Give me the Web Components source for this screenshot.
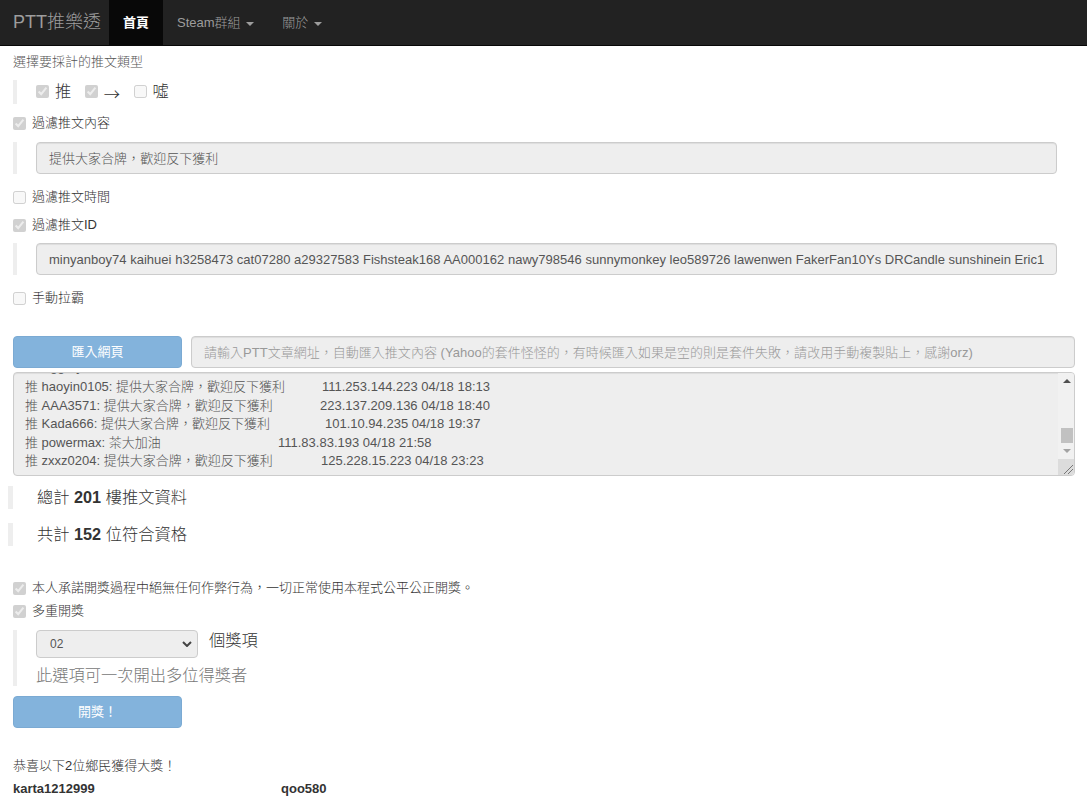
<!DOCTYPE html>
<html lang="zh-Hant">
<head>
<meta charset="utf-8">
<title>PTT推樂透</title>
<style>
  body {
    margin: 0;
    background: #fff;
    color: #333;
    font: 300 13px/18px "Liberation Sans", "Noto Sans CJK TC", sans-serif;
  }
</style>
</head>
<body>
<ptt-app></ptt-app>
<script>
class PttNav extends HTMLElement {
  constructor() {
    super()
    this.attachShadow({mode: "open"})
    this.shadowRoot.innerHTML = `
      <style>
        :host {
          display: flex;
          height: 45px;
          background: #222;
          border-bottom: 1px solid #080808;
          color: #9d9d9d;
          font-size: 13px;
        }
        .brand {
          font-size: 18px;
          padding-left: 13px;
          line-height: 45px;
          width: 96px;
          white-space: nowrap;
        }
        a {
          display: block;
          padding: 0 14px;
          line-height: 45px;
        }
        a.active {
          background: #080808;
          color: #fff;
          font-weight: 700;
        }
        .caret {
          display: inline-block;
          width: 0;
          height: 0;
          margin-left: 2px;
          vertical-align: middle;
          border-top: 4px solid;
          border-left: 4px solid transparent;
          border-right: 4px solid transparent;
        }
      </style>
      <div class="brand">PTT推樂透</div>
      <a class="active">首頁</a>
      <a>Steam群組 <span class="caret"></span></a>
      <a>關於 <span class="caret"></span></a>
    `
  }
}
customElements.define("ptt-nav", PttNav)

class PttCheck extends HTMLElement {
  constructor() {
    super()
    this.attachShadow({mode: "open"})
    const checked = this.hasAttribute("checked") ? "checked" : ""
    this.shadowRoot.innerHTML = `
      <style>
        :host {
          display: inline-flex;
          align-items: center;
          gap: 6px;
        }
        input {
          width: 13px;
          height: 13px;
          margin: 0;
          flex: none;
        }
      </style>
      <input type="checkbox" disabled ${checked}>
      <slot></slot>
    `
  }
}
customElements.define("ptt-check", PttCheck)

class PttQuote extends HTMLElement {
  constructor() {
    super()
    this.attachShadow({mode: "open"})
    this.shadowRoot.innerHTML = `
      <style>
        :host {
          display: block;
          border-left: 4px solid #eee;
          padding-left: 19px;
          box-sizing: border-box;
        }
      </style>
      <slot></slot>
    `
  }
}
customElements.define("ptt-quote", PttQuote)

class PttField extends HTMLElement {
  constructor() {
    super()
    this.attachShadow({mode: "open"})
    this.shadowRoot.innerHTML = `
      <style>
        :host {
          display: block;
          height: 32px;
          box-sizing: border-box;
          background: #eee;
          border: 1px solid #ccc;
          border-radius: 4px;
          box-shadow: inset 0 1px 1px rgba(0,0,0,.075);
          padding: 0 12px;
          line-height: 32px;
          color: #555;
          white-space: nowrap;
          overflow: hidden;
          letter-spacing: .02px;
        }
        :host([placeholder]) {
          color: #999;
        }
      </style>
      <slot></slot>
    `
  }
}
customElements.define("ptt-field", PttField)

class PttButton extends HTMLElement {
  constructor() {
    super()
    this.attachShadow({mode: "open"})
    this.shadowRoot.innerHTML = `
      <style>
        :host {
          display: block;
          width: 169px;
          height: 32px;
          flex: none;
          box-sizing: border-box;
          background: #428bca;
          border: 1px solid #357ebd;
          border-radius: 4px;
          opacity: .65;
          color: #fff;
          font-weight: 400;
          text-align: center;
          line-height: 30px;
        }
      </style>
      <slot></slot>
    `
  }
}
customElements.define("ptt-button", PttButton)

class PttLog extends HTMLElement {
  constructor() {
    super()
    this.attachShadow({mode: "open"})
    this.shadowRoot.innerHTML = `
      <style>
        :host {
          display: block;
          position: relative;
          height: 104px;
          box-sizing: border-box;
          background: #eee;
          border: 1px solid #ccc;
          border-radius: 4px;
          box-shadow: inset 0 1px 1px rgba(0,0,0,.075);
          overflow: hidden;
          color: #555;
        }
        .lines {
          margin-top: -15.5px;
          padding-left: 11px;
          line-height: 18.57px;
          white-space: nowrap;
        }
        .lines > div:first-child {
          margin-bottom: 2px;
        }
        .lines span {
          display: inline-block;
        }
        .bar {
          position: absolute;
          top: 0;
          right: 0;
          bottom: 0;
          width: 16px;
          background: #f1f1f1;
        }
        .thumb {
          position: absolute;
          left: 3px;
          top: 55px;
          width: 12px;
          height: 15px;
          background: #c1c1c1;
        }
        .up, .down {
          position: absolute;
          left: 5px;
          width: 0;
          height: 0;
          border-left: 4px solid transparent;
          border-right: 4px solid transparent;
        }
        .up {
          top: 6px;
          border-bottom: 4px solid #505050;
        }
        .down {
          top: 76px;
          border-top: 4px solid #a3a3a3;
        }
        .grip {
          position: absolute;
          right: 0;
          bottom: 0;
          width: 16px;
          height: 16px;
          background: #dcdcdc;
        }
      </style>
      <div class="lines">
        <div>推 Aggray: 提供大家合牌，歡迎反下獲利</div>
        <div><span style="width:297px">推 haoyin0105: 提供大家合牌，歡迎反下獲利</span>111.253.144.223 04/18 18:13</div>
        <div><span style="width:295px">推 AAA3571: 提供大家合牌，歡迎反下獲利</span>223.137.209.136 04/18 18:40</div>
        <div><span style="width:300px">推 Kada666: 提供大家合牌，歡迎反下獲利</span>101.10.94.235 04/18 19:37</div>
        <div><span style="width:253px">推 powermax: 茶大加油</span>111.83.83.193 04/18 21:58</div>
        <div><span style="width:296px">推 zxxz0204: 提供大家合牌，歡迎反下獲利</span>125.228.15.223 04/18 23:23</div>
      </div>
      <div class="bar">
        <div class="up"></div>
        <div class="thumb"></div>
        <div class="down"></div>
        <div class="grip">
          <svg width="16" height="16" viewBox="0 0 16 16">
            <path d="M6 15 15 6M10 15l5-5" stroke="#777" stroke-width="1" fill="none"/>
          </svg>
        </div>
      </div>
    `
  }
}
customElements.define("ptt-log", PttLog)

class PttSelect extends HTMLElement {
  constructor() {
    super()
    this.attachShadow({mode: "open"})
    this.shadowRoot.innerHTML = `
      <style>
        :host {
          display: flex;
          align-items: center;
          justify-content: space-between;
          width: 162px;
          height: 28px;
          box-sizing: border-box;
          background: #eee;
          border: 1px solid #ccc;
          border-radius: 4px;
          padding: 0 5px 0 13px;
          color: #555;
          font-size: 12px;
        }
      </style>
      <slot></slot>
      <svg width="10" height="6" viewBox="0 0 10 6">
        <path d="M1 1l4 4 4-4" stroke="#444" stroke-width="2" fill="none"/>
      </svg>
    `
  }
}
customElements.define("ptt-select", PttSelect)

class PttApp extends HTMLElement {
  constructor() {
    super()
    this.attachShadow({mode: "open"})
    this.shadowRoot.innerHTML = `
      <style>
        :host {
          display: block;
        }
        main {
          padding: 0 12px 0 13px;
        }
        b {
          font-weight: 700;
        }
        .line {
          height: 18px;
          color: #333;
        }
        .text {
          line-height: 20px;
        }
        .title { margin-top: 6px; color: #555; }
        .types {
          margin-top: 10px;
          height: 24px;
          padding-bottom: 2px;
          display: flex;
          align-items: center;
          gap: 13.5px;
          font-size: 16.25px;
        }
        .types .arrow {
          font-family: "Noto Sans CJK TC", sans-serif;
          position: relative;
          top: 2px;
        }
        .input-wrap ptt-field { margin-right: 18px; }
        .mt5 { margin-top: 5px; }
        .mt9 { margin-top: 9px; }
        .mt10 { margin-top: 10px; }
        .mt14 { margin-top: 14px; }
        .mt28 { margin-top: 28px; }
        .mt33 { margin-top: 33px; }
        .import {
          margin-top: 29px;
          display: flex;
          gap: 9px;
        }
        .import ptt-field { flex: 1; min-width: 0; }
        ptt-log { margin-top: 4px; }
        .total {
          margin-left: -5px;
          height: 23px;
          padding-left: 24px;
          border-left-width: 5px;
          font-size: 16.25px;
          line-height: 23px;
        }
        .prize { height: 56px; }
        .prize-row {
          display: flex;
          gap: 11px;
          font-size: 16.25px;
          line-height: 21px;
        }
        .hint {
          margin-top: 6px;
          font-size: 16.25px;
          line-height: 22px;
          color: #777;
        }
        .winners {
          display: grid;
          grid-template-columns: 268px 268px;
          font-weight: 700;
        }
      </style>
      <ptt-nav></ptt-nav>
      <main>
        <div class="line text title">選擇要採計的推文類型</div>
        <ptt-quote class="types">
          <ptt-check checked>推</ptt-check>
          <ptt-check checked><span class="arrow">→</span></ptt-check>
          <ptt-check>噓</ptt-check>
        </ptt-quote>
        <div class="line mt10"><ptt-check checked>過濾推文內容</ptt-check></div>
        <ptt-quote class="mt10 input-wrap"><ptt-field>提供大家合牌，歡迎反下獲利</ptt-field></ptt-quote>
        <div class="line mt14"><ptt-check>過濾推文時間</ptt-check></div>
        <div class="line mt10"><ptt-check checked>過濾推文ID</ptt-check></div>
        <ptt-quote class="mt9 input-wrap"><ptt-field>minyanboy74 kaihuei h3258473 cat07280 a29327583 Fishsteak168 AA000162 nawy798546 sunnymonkey leo589726 lawenwen FakerFan10Ys DRCandle sunshinein Eric1</ptt-field></ptt-quote>
        <div class="line mt14"><ptt-check>手動拉霸</ptt-check></div>
        <div class="import">
          <ptt-button>匯入網頁</ptt-button>
          <ptt-field placeholder>請輸入PTT文章網址，自動匯入推文內容 (Yahoo的套件怪怪的，有時候匯入如果是空的則是套件失敗，請改用手動複製貼上，感謝orz)</ptt-field>
        </div>
        <ptt-log></ptt-log>
        <ptt-quote class="total mt10">總計 <b>201</b> 樓推文資料</ptt-quote>
        <ptt-quote class="total mt14">共計 <b>152</b> 位符合資格</ptt-quote>
        <div class="line mt33"><ptt-check checked>本人承諾開獎過程中絕無任何作弊行為，一切正常使用本程式公平公正開獎。</ptt-check></div>
        <div class="line mt5"><ptt-check checked>多重開獎</ptt-check></div>
        <ptt-quote class="prize mt10">
          <div class="prize-row"><ptt-select>02</ptt-select><span>個獎項</span></div>
          <div class="hint">此選項可一次開出多位得獎者</div>
        </ptt-quote>
        <ptt-button class="mt10">開獎！</ptt-button>
        <div class="line text mt28">恭喜以下2位鄉民獲得大獎！</div>
        <div class="line text mt5 winners"><span>karta1212999</span><span>qoo580</span></div>
      </main>
    `
  }
}
customElements.define("ptt-app", PttApp)
</script>
</body>
</html>
